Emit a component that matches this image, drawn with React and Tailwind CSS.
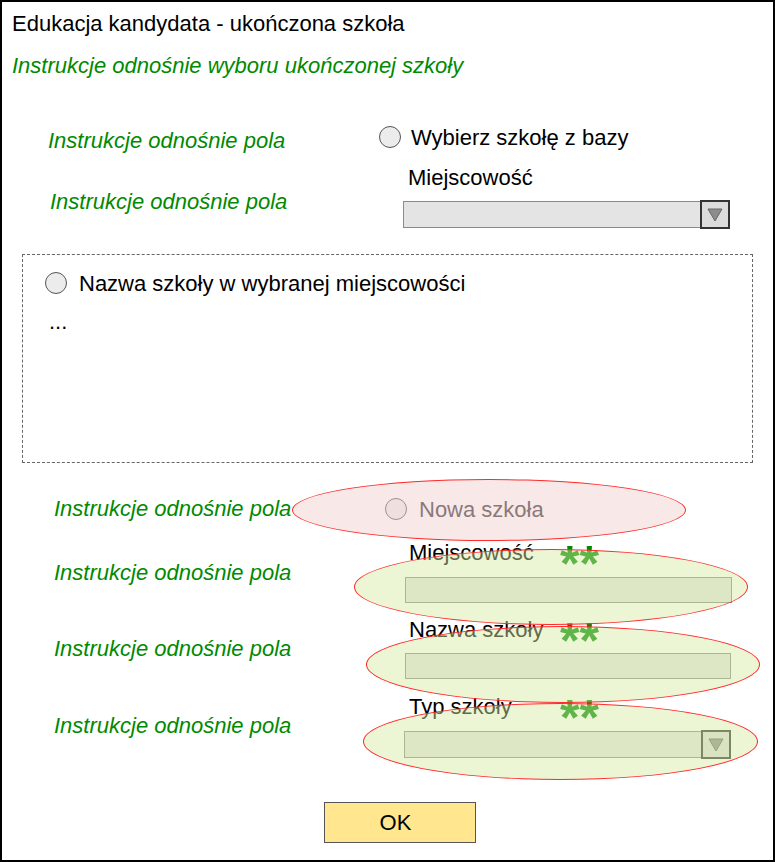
import React from "react";

const green = "text-[#008a00]";

const Radio = ({ faded }) => (
  <span
    className={`inline-block w-[22px] h-[22px] rounded-full border shrink-0 ${
      faded ? "border-[#777] bg-[#f2f2f2]" : "border-[#555] bg-[#ececec]"
    }`}
  />
);

const Instr = ({ className = "" }) => (
  <div className={`italic ${green} text-[22px] leading-[26px] ${className}`}>
    Instrukcje odnośnie pola
  </div>
);

const Stars = () => (
  <span className="text-[#008a00] font-bold text-[50px] leading-[26px] h-[26px] pt-[11px]">
    **
  </span>
);

const Select = ({ width = "w-[327px]" }) => (
  <div className={`flex ${width} h-[27px] bg-[#e4e4e4] border border-[#8a8a8a]`}>
    <div className="flex-1" />
    <div className="w-[30px] h-[29px] -mt-[2px] -mr-[1px] border-2 border-[#333] bg-[#dcdcdc] flex items-center justify-center">
      <svg width="16" height="14" viewBox="0 0 16 14">
        <polygon points="1,1 15,1 8,13" fill="#8c8c8c" stroke="#666" strokeWidth="1" />
      </svg>
    </div>
  </div>
);

const Ellipse = ({ className, fill }) => (
  <div
    className={`absolute rounded-[50%] border border-[#ff2a2a] pointer-events-none ${fill} ${className}`}
  />
);

export default function App() {
  return (
    <div
      className="relative w-[775px] h-[862px] border-2 border-black bg-white text-black overflow-hidden"
      style={{ fontFamily: '"Liberation Sans", Arial, sans-serif' }}
    >
      {/* header */}
      <div className="pl-[10px] pt-[9px] text-[22px] leading-[26px]">
        Edukacja kandydata - ukończona szkoła
      </div>
      <div className={`pl-[10px] mt-[16px] italic text-[22px] leading-[26px] ${green}`}>
        Instrukcje odnośnie wyboru ukończonej szkoły
      </div>

      {/* wybór z bazy */}
      <div className="flex mt-[45px]">
        <div className="w-[377px] pl-[46px] pt-[4px]">
          <Instr />
        </div>
        <div className="flex items-center gap-[10px] h-[26px] text-[22px]">
          <Radio />
          <span>Wybierz szkołę z bazy</span>
        </div>
      </div>

      <div className="flex mt-[11px]">
        <div className="w-[401px] pl-[48px] pt-[24px]">
          <Instr />
        </div>
        <div>
          <div className="ml-[5px] h-[26px] text-[22px] leading-[26px]">Miejscowość</div>
          <div className="mt-[10px]">
            <Select />
          </div>
        </div>
      </div>

      {/* lista szkół */}
      <div className="ml-[20px] mt-[26px] w-[731px] h-[209px] border border-dashed border-[#666] pl-[22px] pt-[15px]">
        <div className="flex items-center gap-[12px] h-[26px] text-[22px]">
          <Radio />
          <span>Nazwa szkoły w wybranej miejscowości</span>
        </div>
        <div className="mt-[13px] ml-[4px] text-[22px] leading-[26px]">...</div>
      </div>

      {/* nowa szkoła */}
      <div className="flex mt-[33px]">
        <div className="w-[383px] pl-[52px]">
          <Instr />
        </div>
        <div className="flex items-center gap-[12px] h-[26px] text-[22px]">
          <Radio faded />
          <span className="text-[#555]">Nowa szkoła</span>
        </div>
      </div>

      <div className="flex mt-[18px]">
        <div className="w-[403px] pl-[52px] pt-[20px]">
          <Instr />
        </div>
        <div>
          <div className="flex ml-[4px] h-[26px] text-[22px] leading-[26px]">
            <span className="w-[151px]">Miejscowość</span>
            <Stars />
          </div>
          <div className="mt-[11px] w-[327px] h-[26px] bg-[#e4e4e4] border border-[#8a8a8a]" />
        </div>
      </div>

      <div className="flex mt-[14px]">
        <div className="w-[403px] pl-[52px] pt-[19px]">
          <Instr />
        </div>
        <div>
          <div className="flex ml-[4px] h-[26px] text-[22px] leading-[26px]">
            <span className="w-[151px]">Nazwa szkoły</span>
            <Stars />
          </div>
          <div className="mt-[10px] w-[326px] h-[26px] bg-[#e4e4e4] border border-[#8a8a8a]" />
        </div>
      </div>

      <div className="flex mt-[15px]">
        <div className="w-[402px] pl-[52px] pt-[19px]">
          <Instr />
        </div>
        <div>
          <div className="flex ml-[5px] h-[26px] text-[22px] leading-[26px]">
            <span className="w-[151px]">Typ szkoły</span>
            <Stars />
          </div>
          <div className="mt-[11px]">
            <Select />
          </div>
        </div>
      </div>

      {/* OK */}
      <div className="mt-[44px] ml-[322px] w-[152px] h-[41px] bg-[#ffe68f] border border-[#555] flex items-center justify-center pr-[9px] pb-[1px] text-[22px]">
        OK
      </div>

      {/* adnotacje */}
      <Ellipse className="left-[290px] top-[477px] w-[394px] h-[62px]" fill="bg-[rgba(236,190,190,0.35)]" />
      <Ellipse className="left-[352px] top-[547px] w-[394px] h-[76px]" fill="bg-[rgba(213,232,160,0.45)]" />
      <Ellipse className="left-[364px] top-[624px] w-[394px] h-[77px]" fill="bg-[rgba(213,232,160,0.45)]" />
      <Ellipse className="left-[361px] top-[701px] w-[395px] h-[77px]" fill="bg-[rgba(213,232,160,0.45)]" />
    </div>
  );
}
